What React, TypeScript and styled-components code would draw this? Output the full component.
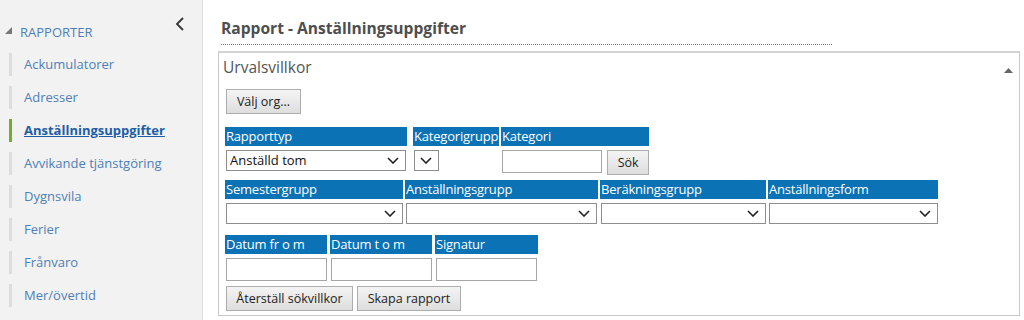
import React from 'react';
import styled, { createGlobalStyle } from 'styled-components';

const colors = {
  sidebarBg: '#f2f2f2',
  sidebarBorder: '#dcdcdc',
  link: '#4f7fb9',
  linkActive: '#1d5ea6',
  barIdle: '#dddddd',
  barActive: '#74ad2b',
  header: '#0b72b6',
  text: '#555555',
  control: '#a6a6a6'
};

const menuData = [
  { title: 'Ackumulatorer' },
  { title: 'Adresser' },
  { title: 'Anställningsuppgifter', active: true },
  { title: 'Avvikande tjänstgöring' },
  { title: 'Dygnsvila' },
  { title: 'Ferier' },
  { title: 'Frånvaro' },
  { title: 'Mer/övertid' }
];

const Chevron = () => (
  <ChevronIcon width="12" height="7" viewBox="0 0 12 7">
    <path d="M1 1 L6 6 L11 1" fill="none" stroke="#222" strokeWidth="1.6" />
  </ChevronIcon>
);

const Select = ({ value = '', width }: { value?: string; width: number }) => (
  <SelectBox $w={width}>
    <span>{value}</span>
    <Chevron />
  </SelectBox>
);

const App = () => {
  return (
    <>
      <GlobalStyle />
      <Page>
        <Sidebar>
          <CollapseButton>
            <svg width="10" height="14" viewBox="0 0 10 14">
              <path d="M8 1 L2 7 L8 13" fill="none" stroke="#333" strokeWidth="1.8" />
            </svg>
          </CollapseButton>
          <SectionTitle>
            <svg width="7" height="7" viewBox="0 0 7 7">
              <path d="M7 0 L7 7 L0 7 Z" fill="#777" />
            </svg>
            RAPPORTER
          </SectionTitle>
          <Menu>
            {menuData.map((item) => (
              <MenuItem key={item.title} $active={!!item.active}>
                {item.title}
              </MenuItem>
            ))}
          </Menu>
        </Sidebar>

        <Main>
          <Title>Rapport - Anställningsuppgifter</Title>
          <Panel>
            <PanelToggle>
              <svg width="9" height="5" viewBox="0 0 9 5">
                <path d="M0 5 L4.5 0 L9 5 Z" fill="#666" />
              </svg>
            </PanelToggle>
            <PanelTitle>Urvalsvillkor</PanelTitle>
            <Button $w={75}>Välj org...</Button>

            <FieldRow $top={13}>
              <Field $w={182}>
                <Label>Rapporttyp</Label>
                <Select value="Anställd tom" width={180} />
              </Field>
              <Field $w={86} $ml={6}>
                <Label>Kategorigrupp</Label>
                <Select width={25} />
              </Field>
              <Field $w={148} $ml={2}>
                <Label>Kategori</Label>
                <Inline>
                  <TextInput $w={101} $h={23} />
                  <Button $w={42}>Sök</Button>
                </Inline>
              </Field>
            </FieldRow>

            <FieldRow $top={5}>
              <Field $w={178}>
                <Label>Semestergrupp</Label>
                <Select width={177} />
              </Field>
              <Field $w={193} $ml={2}>
                <Label>Anställningsgrupp</Label>
                <Select width={191} />
              </Field>
              <Field $w={166} $ml={2}>
                <Label>Beräkningsgrupp</Label>
                <Select width={165} />
              </Field>
              <Field $w={170} $ml={2}>
                <Label>Anställningsform</Label>
                <Select width={169} />
              </Field>
            </FieldRow>

            <FieldRow $top={11}>
              <Field $w={102}>
                <Label>Datum fr o m</Label>
                <TextInput $w={101} $h={23} />
              </Field>
              <Field $w={102} $ml={3}>
                <Label>Datum t o m</Label>
                <TextInput $w={101} $h={23} />
              </Field>
              <Field $w={103} $ml={3}>
                <Label>Signatur</Label>
                <TextInput $w={101} $h={23} />
              </Field>
            </FieldRow>

            <ButtonRow>
              <Button $w={127}>Återställ sökvillkor</Button>
              <Button $w={104}>Skapa rapport</Button>
            </ButtonRow>
          </Panel>
        </Main>
      </Page>
    </>
  );
};

export default App;

const GlobalStyle = createGlobalStyle`
  html, body {
    margin: 0;
    padding: 0;
    background: #fff;
    font-family: "Open Sans", "DejaVu Sans", sans-serif;
  }
`;

const Page = styled.div`
  display: flex;
  width: 1024px;
  height: 320px;
  overflow: hidden;
`;

const Sidebar = styled.aside`
  position: relative;
  width: 203px;
  flex-shrink: 0;
  background: ${colors.sidebarBg};
  border-right: 1px solid ${colors.sidebarBorder};
  box-sizing: border-box;
  padding-top: 23px;
`;

const CollapseButton = styled.div`
  position: absolute;
  top: 14px;
  left: 175px;
`;

const SectionTitle = styled.div`
  display: flex;
  align-items: center;
  gap: 8px;
  padding-left: 5px;
  font-size: 13px;
  color: ${colors.link};
  height: 18px;

  svg {
    margin-top: -3px;
  }
`;

const Menu = styled.ul`
  list-style: none;
  margin: 12px 0 0;
  padding: 0 0 0 9px;
  display: flex;
  flex-direction: column;
  gap: 10px;
`;

const MenuItem = styled.li<{ $active: boolean }>`
  height: 23px;
  line-height: 23px;
  border-left: 3px solid ${(p) => (p.$active ? colors.barActive : colors.barIdle)};
  padding-left: 12px;
  font-size: 13px;
  color: ${(p) => (p.$active ? colors.linkActive : colors.link)};
  font-weight: ${(p) => (p.$active ? 700 : 400)};
  text-decoration: ${(p) => (p.$active ? 'underline' : 'none')};
  white-space: nowrap;
`;

const Main = styled.main`
  flex: 1;
  padding: 18px 0 0 15px;
`;

const Title = styled.h1`
  margin: 0 0 0 3px;
  width: 611px;
  font-size: 15.6px;
  font-weight: 700;
  color: #4e4e4e;
  line-height: 20px;
  padding-bottom: 6px;
  border-bottom: 1px dotted #2f8ab8;
`;

const Panel = styled.section`
  position: relative;
  margin-top: 6px;
  width: 802px;
  height: 265px;
  box-sizing: border-box;
  border: 1px solid #c8c8c8;
  border-top: 2px solid #d2d2d2;
  padding: 3px 0 0 6px;
`;

const PanelToggle = styled.div`
  position: absolute;
  top: 3px;
  right: 6px;
`;

const PanelTitle = styled.div`
  margin: 0 0 11px -2px;
  font-size: 15.5px;
  color: ${colors.text};
  line-height: 22px;
`;

const Button = styled.button<{ $w: number }>`
  width: ${(p) => p.$w}px;
  height: 25px;
  margin-left: 1px;
  padding: 0;
  font-family: inherit;
  font-size: 12.5px;
  color: #222;
  background: linear-gradient(#f4f4f4, #dedede);
  border: 1px solid #adadad;
  border-radius: 0;
  white-space: nowrap;
`;

const FieldRow = styled.div<{ $top: number }>`
  display: flex;
  margin-top: ${(p) => p.$top}px;
`;

const Field = styled.div<{ $w: number; $ml?: number }>`
  width: ${(p) => p.$w}px;
  margin-left: ${(p) => p.$ml ?? 0}px;
  display: flex;
  flex-direction: column;
  gap: 4px;
`;

const Label = styled.div`
  height: 19px;
  line-height: 19px;
  background: ${colors.header};
  color: #fff;
  font-size: 13px;
  letter-spacing: -0.2px;
  padding-left: 1px;
  white-space: nowrap;
  overflow: hidden;
`;

const Inline = styled.div`
  display: flex;
  gap: 4px;
  align-items: flex-start;
`;

const TextInput = styled.div<{ $w: number; $h: number }>`
  width: ${(p) => p.$w}px;
  height: ${(p) => p.$h}px;
  margin-left: 1px;
  box-sizing: border-box;
  border: 1px solid ${colors.control};
  background: #fff;
`;

const SelectBox = styled.div<{ $w: number }>`
  position: relative;
  width: ${(p) => p.$w}px;
  height: 21px;
  margin-left: 1px;
  box-sizing: border-box;
  border: 1px solid #8e8e8e;
  background: #fff;
  font-size: 13px;
  line-height: 19px;
  padding-left: 3px;
  color: #111;
`;

const ChevronIcon = styled.svg`
  position: absolute;
  right: 6px;
  top: 6px;
`;

const ButtonRow = styled.div`
  display: flex;
  gap: 3px;
  margin-top: 5px;
`;
